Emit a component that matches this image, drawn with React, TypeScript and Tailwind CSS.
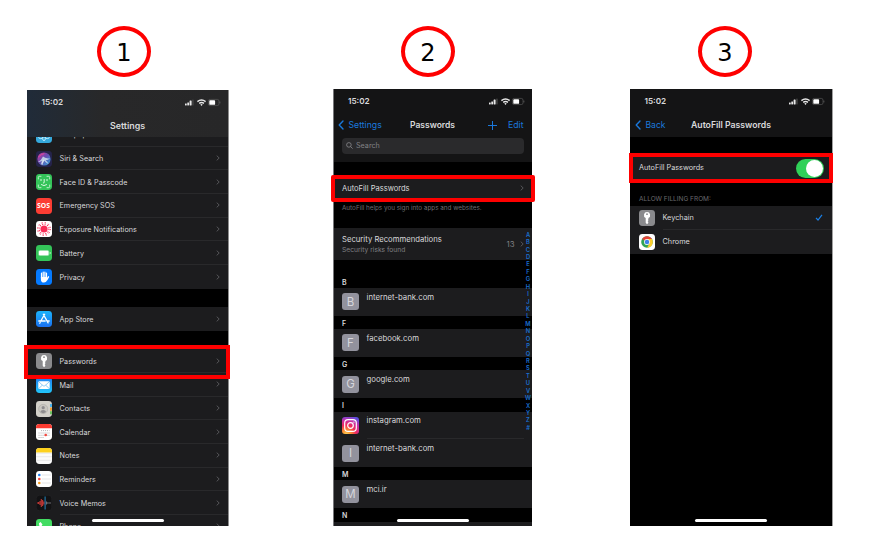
import React from "react";

function Chevron() {
  return (
    <svg className="h-[6px] w-[4px] shrink-0" viewBox="0 0 4 6" fill="none" stroke="#5c5c60" strokeWidth="0.9">
      <path d="M0.7 0.6 3.2 3 0.7 5.4" />
    </svg>
  );
}

function StatusIcons() {
  return (
    <svg className="h-[9px] w-[36px] shrink-0" viewBox="0 0 36 9">
      <g fill="#e8e8e8">
        <rect x="0" y="5.4" width="1.7" height="2" rx="0.4" />
        <rect x="2.3" y="4.4" width="1.7" height="3" rx="0.4" />
        <rect x="4.6" y="2.6" width="2" height="4.8" rx="0.4" />
        <rect x="7.3" y="1.5" width="1.3" height="5.900" rx="0.4" fill="#4b4b4b" />
      </g>
      <g fill="none" stroke="#e8e8e8" strokeWidth="1.4">
        <path d="M12.4 3.6q4.100-3.300 8.200 0" />
        <path d="M14.2 5.4q2.4-1.8 4.8 0" />
      </g>
      <path d="M15.3 6.5q1.200-.8 2.400 0l-1.200 1.400z" fill="#e8e8e8" />
      <rect x="23.4" y="1.4" width="10.600" height="6.200" rx="1.7" fill="none" stroke="#626262" strokeWidth="0.6" />
      <rect x="24.3" y="2.2" width="5.800" height="4.600" rx="0.9" fill="#fff" />
      <path d="M34.9 3.600v1.800" stroke="#626262" strokeWidth="0.8" />
    </svg>
  );
}

function Step({ n }: { n: number }) {
  return (
    <div className="flex h-[51px] w-[54px] items-center justify-center rounded-[50%] border-4 border-[#fe0000] pt-[2px] font-['DejaVu_Sans',sans-serif] text-[24px] leading-none text-black">
      {n}
    </div>
  );
}

function KeyIcon() {
  return (
    <svg viewBox="0 0 16 16" className="size-full">
      <rect width="16" height="16" rx="3.4" fill="#8a8a8d" />
      <path d="M8 2.1a3.100 3.100 0 0 0-1.300 5.900v4.700L8 14.200l1.500-1.500-.8-.9.8-1-.7-.8.6-.7V8A3.100 3.100 0 0 0 8 2.100z" fill="#fff" />
      <circle cx="8" cy="4.2" r="0.9" fill="#8a8a8d" />
    </svg>
  );
}

const icons: Record<string, React.ReactNode> = {
  Wallpaper: (
    <svg viewBox="0 0 16 16" className="size-full">
      <rect width="16" height="16" rx="3.4" fill="#35a9dc" />
      <g fill="none" stroke="#c5ecfa" strokeWidth="0.9">
        <circle cx="8" cy="8" r="1.4" />
        <ellipse cx="8" cy="4.4" rx="1.4" ry="2" />
        <ellipse cx="8" cy="11.6" rx="1.4" ry="2" />
        <ellipse cx="4.7" cy="10.2" rx="2" ry="1.4" />
        <ellipse cx="11.3" cy="10.2" rx="2" ry="1.4" />
      </g>
    </svg>
  ),
  "Siri & Search": (
    <svg viewBox="0 0 16 16" className="size-full">
      <defs>
        <linearGradient id="siri" x1="0" y1="0" x2="1" y2="1">
          <stop offset="0" stopColor="#d43b9b" />
          <stop offset="0.45" stopColor="#6b4bb0" />
          <stop offset="1" stopColor="#29a7d8" />
        </linearGradient>
      </defs>
      <rect width="16" height="16" rx="3.4" fill="#25234a" />
      <circle cx="8" cy="8" r="6.6" fill="url(#siri)" />
      <path d="M2 11q3.2-1.3 5-5.4Q9.5 8 14.2 7.2 12 9 9.7 9.2q2 1.4 2.8 3.8Q9.700 11.700 8.300 9.700 7 12.700 4.600 13.600 5.700 11.300 5.900 9.800 4.300 11 2 11z" fill="#cbe2ee" fillOpacity="0.85" />
      <path d="M2.300 6q3-3 6-3.400" stroke="#db4598" strokeWidth="1" fill="none" />
      <path d="M7.500 8.800 6 14" stroke="#fff" strokeWidth="0.6" />
    </svg>
  ),
  "Face ID & Passcode": (
    <svg viewBox="0 0 16 16" className="size-full">
      <rect width="16" height="16" rx="3.4" fill="#34c459" />
      <g fill="none" stroke="#e4fbe9" strokeWidth="0.8" strokeLinecap="round">
        <path d="M2.300 5V3.500q0-1.200 1.200-1.200H5M11 2.300h1.500q1.200 0 1.200 1.200V5M13.700 11v1.500q0 1.200-1.200 1.200H11M5 13.700H3.500q-1.200 0-1.200-1.200V11" />
        <path d="M5 5.400v1.300M11 5.400v1.300M8.200 5.400v3q0 .6-.8.600M5.400 10.700q2.600 2 5.200 0" strokeWidth="0.95" />
      </g>
    </svg>
  ),
  "Emergency SOS": (
    <div className="flex size-full items-center justify-center rounded-[3.4px] bg-[#fc3d33] pt-px font-['Open_Sans',sans-serif] text-[6.8px] leading-none font-bold text-white">
      SOS
    </div>
  ),
  "Exposure Notifications": (
    <svg viewBox="0 0 16 16" className="size-full">
      <rect width="16" height="16" rx="3.4" fill="#fff" />
      <circle cx="8" cy="8" r="3.6" fill="#fb2b56" />
      <circle cx="8" cy="8" r="5" fill="none" stroke="#fb2b56" strokeWidth="1.200" strokeDasharray="1.200 1.418" />
      <circle cx="8" cy="8" r="6.500" fill="none" stroke="#fb2b56" strokeWidth="1" strokeDasharray="1.200 2.203" />
    </svg>
  ),
  Battery: (
    <svg viewBox="0 0 16 16" className="size-full">
      <rect width="16" height="16" rx="3.4" fill="#34c459" />
      <rect x="2.300" y="5.200" width="11" height="5.600" rx="1.500" fill="#8ee3a2" />
      <rect x="3" y="5.800" width="9.400" height="4.400" rx="0.900" fill="#fff" />
      <path d="M14.200 7v2" stroke="#b9f0c5" strokeWidth="0.900" />
    </svg>
  ),
  Privacy: (
    <svg viewBox="0 0 16 16" className="size-full">
      <rect width="16" height="16" rx="3.4" fill="#057aff" />
      <g stroke="#fff" strokeWidth="1.200" strokeLinecap="round" fill="none">
        <path d="M5.500 4.200V9M7.200 3V9M8.900 3V9M10.500 4.200V9" />
        <path d="M12.500 7.800 10.700 10.800" strokeWidth="1.400" />
      </g>
      <path d="M4.900 8h6.300v2.600q-.6 3-3.300 3-3 0-3-3.400z" fill="#fff" />
    </svg>
  ),
  "App Store": (
    <svg viewBox="0 0 16 16" className="size-full">
      <defs>
        <linearGradient id="store" x1="0" y1="0" x2="0" y2="1">
          <stop offset="0" stopColor="#1cb4fb" />
          <stop offset="1" stopColor="#1a71f1" />
        </linearGradient>
      </defs>
      <rect width="16" height="16" rx="3.400" fill="url(#store)" />
      <g stroke="#fff" strokeWidth="1.300" strokeLinecap="round">
        <path d="M8.700 3.200 4.900 9.800M7.300 3.200l4.800 8.700M2.800 10h6.400M11 10h2.200M4.200 11.500l-.4.700" />
      </g>
    </svg>
  ),
  Passwords: <KeyIcon />,
  Mail: (
    <svg viewBox="0 0 16 16" className="size-full">
      <defs>
        <linearGradient id="mail" x1="0" y1="0" x2="0" y2="1">
          <stop offset="0" stopColor="#1f7bef" />
          <stop offset="1" stopColor="#22c6fa" />
        </linearGradient>
      </defs>
      <rect width="16" height="16" rx="3.400" fill="url(#mail)" />
      <rect x="2.300" y="4.200" width="11.400" height="7.800" rx="1.200" fill="#fff" />
      <path d="M2.800 4.800 7 8.700q1 .8 2 0l4.200-3.900M2.800 11.500l3.500-3.300M13.200 11.500 9.700 8.200" fill="none" stroke="#46a9ee" strokeWidth="0.600" />
    </svg>
  ),
  Contacts: (
    <svg viewBox="0 0 16 16" className="size-full">
      <rect width="16" height="16" rx="3.400" fill="#d3d0c9" />
      <path d="M15 3v3" stroke="#39aef0" strokeWidth="1.800" />
      <path d="M15 6.500v3.200" stroke="#f49b27" strokeWidth="1.800" />
      <path d="M15 10.200v3" stroke="#5cc04e" strokeWidth="1.800" />
      <circle cx="7.200" cy="8" r="4.600" fill="#c9c6c0" stroke="#aaa7a2" strokeWidth="0.600" />
      <circle cx="7.200" cy="6.700" r="1.600" fill="#8e8c8e" />
      <path d="M4.300 11q.5-2 2.900-2t2.900 2q-2.900 2.300-5.800 0z" fill="#8e8c8e" />
    </svg>
  ),
  Calendar: (
    <svg viewBox="0 0 16 16" className="size-full">
      <rect width="16" height="16" rx="3.400" fill="#fff" />
      <path d="M0 4.200V3.400Q0 0 3.400 0h9.200Q16 0 16 3.400v.8z" fill="#fb3b30" />
      <g stroke="#9a9a9c" strokeWidth="0.700" strokeDasharray="1.100 0.900">
        <path d="M5 6.600h8.500M2.500 9h11M2.500 11.300h11M2.500 13.500h6" />
      </g>
      <circle cx="9.700" cy="11" r="1.300" fill="#f5483f" />
    </svg>
  ),
  Notes: (
    <svg viewBox="0 0 16 16" className="size-full">
      <rect width="16" height="16" rx="3.400" fill="#fbfbfb" />
      <path d="M0 4.400v-1Q0 0 3.400 0h9.200Q16 0 16 3.400v1z" fill="#fdd11e" />
      <path d="M0 5.300h16" stroke="#b9b9ad" strokeWidth="0.500" strokeDasharray="0.500 0.500" />
      <path d="M0 8.700h16M0 12.300h16" stroke="#d4d4d6" strokeWidth="0.500" />
    </svg>
  ),
  Reminders: (
    <svg viewBox="0 0 16 16" className="size-full">
      <rect width="16" height="16" rx="3.400" fill="#fff" />
      <circle cx="3.300" cy="4" r="1.300" fill="#1b80f5" />
      <circle cx="3.300" cy="8" r="1.300" fill="#f4453c" />
      <circle cx="3.300" cy="12" r="1.300" fill="#f79a1e" />
      <path d="M5.800 4H15M5.800 8H15M5.800 12H15" stroke="#d3d3d6" strokeWidth="0.600" />
    </svg>
  ),
  "Voice Memos": (
    <svg viewBox="0 0 16 16" className="size-full">
      <rect x="0.200" y="0.200" width="15.600" height="15.600" rx="3.400" fill="#121214" stroke="#303032" strokeWidth="0.400" />
      <path d="M1 8h1M2.600 7v2M4 6v4M5.300 4v8M6.600 5v6M7.900 6.500v3" stroke="#c23936" strokeWidth="1.100" />
      <path d="M9.100 1.500v13" stroke="#2694d6" strokeWidth="0.900" />
      <path d="M10.500 6.500v3M11.800 7.200v1.600M12.500 8H15" stroke="#87878a" strokeWidth="0.800" />
    </svg>
  ),
  Phone: (
    <svg viewBox="0 0 16 16" className="size-full">
      <rect width="16" height="16" rx="3.400" fill="#43dc62" />
      <path d="M3 4.200 4.600 2.900 6.500 5.500 5.700 6.800Q7 9.400 9.300 10.300l1.300-.8 2.600 1.900-1.300 1.700Q9.500 14 6.200 11 3 8 3 4.200z" fill="#fff" />
    </svg>
  ),
};

function SettingsRow({ name, last = false }: { name: string; last?: boolean }) {
  return (
    <div className="flex h-[23.65px] shrink-0 items-stretch bg-[#1c1c1e] pl-[8.500px]">
      <div className="my-auto size-[16px] shrink-0">{icons[name]}</div>
      <div className={`ml-[8px] flex grow items-center justify-between pr-[8.500px] ${last ? "" : "border-b-[0.500px] border-[#29292b]"}`}>
        <span className="pt-[3px] text-[7.200px] tracking-[0.030px]">{name}</span>
        <Chevron />
      </div>
    </div>
  );
}

function BackArrow() {
  return (
    <svg className="h-[10px] w-[6px] shrink-0" viewBox="0 0 6 10" fill="none" stroke="#1a78dc" strokeWidth="1.400" strokeLinecap="round" strokeLinejoin="round">
      <path d="M5 1 1.200 5 5 9" />
    </svg>
  );
}

function HomeBar() {
  return <div className="absolute bottom-[4px] left-1/2 h-[3px] w-[72px] -translate-x-1/2 rounded-full bg-white" />;
}

function SettingsPhone() {
  return (
    <div className="relative flex h-[436px] w-[202px] flex-col overflow-hidden border-r border-[#8d8d8d] bg-black text-[#d9d9db]">
      <div className="flex h-[47px] shrink-0 flex-col bg-[linear-gradient(90deg,#202b39_0%,#242a31_18%,#282829_38%,#272728_100%)]">
        <div className="flex h-[24px] items-center justify-between pr-[7px] pl-[14.500px]">
          <span className="pt-px text-[8.200px] font-semibold">15:02</span>
          <StatusIcons />
        </div>
        <div className="flex h-[23px] items-center justify-center pt-px text-[8.900px] font-semibold">Settings</div>
      </div>
      <div className="flex h-[9.700px] shrink-0 flex-col justify-end overflow-hidden">
        <SettingsRow name="Wallpaper" />
      </div>
      <SettingsRow name="Siri & Search" />
      <SettingsRow name="Face ID & Passcode" />
      <SettingsRow name="Emergency SOS" />
      <SettingsRow name="Exposure Notifications" />
      <SettingsRow name="Battery" />
      <SettingsRow name="Privacy" last />
      <div className="h-[18.400px] shrink-0" />
      <SettingsRow name="App Store" last />
      <div className="h-[18.900px] shrink-0" />
      <SettingsRow name="Passwords" />
      <SettingsRow name="Mail" />
      <SettingsRow name="Contacts" />
      <SettingsRow name="Calendar" />
      <SettingsRow name="Notes" />
      <SettingsRow name="Reminders" />
      <SettingsRow name="Voice Memos" />
      <SettingsRow name="Phone" />
      <HomeBar />
    </div>
  );
}

function Letter({ children }: { children: string }) {
  return <div className="flex h-[13.500px] shrink-0 items-center pt-[3px] pl-[8px] text-[7px] font-semibold">{children}</div>;
}

function InstagramIcon() {
  return (
    <svg viewBox="0 0 17 17" className="size-[17px]">
      <defs>
        <radialGradient id="insta" cx="0.250" cy="1.050" r="1.150">
          <stop offset="0" stopColor="#fed957" />
          <stop offset="0.250" stopColor="#fb8c30" />
          <stop offset="0.500" stopColor="#ee2a5c" />
          <stop offset="0.750" stopColor="#c92fa8" />
          <stop offset="1" stopColor="#5b4fe0" />
        </radialGradient>
      </defs>
      <rect width="17" height="17" rx="3" fill="url(#insta)" />
      <g fill="none" stroke="#fff" strokeWidth="1.200">
        <rect x="2.700" y="2.700" width="11.600" height="11.600" rx="3.400" />
        <circle cx="8.500" cy="8.500" r="2.800" />
      </g>
      <circle cx="11.900" cy="5.100" r="0.700" fill="#fff" />
    </svg>
  );
}

function Account({ site, initial, line = false }: { site: string; initial?: string; line?: boolean }) {
  return (
    <div className="flex h-[27.700px] shrink-0 bg-[#1c1c1e] pl-[8px]">
      <div className="mt-[5.300px] size-[17px] shrink-0">
        {initial ? (
          <div className="flex size-full items-center justify-center rounded-[3px] bg-[#92929d] pt-px text-[11.500px] leading-none text-[#d6d6dc]">
            {initial}
          </div>
        ) : (
          <InstagramIcon />
        )}
      </div>
      <div className={`mr-[8px] ml-[7.500px] grow pt-[3.800px] text-[7.750px] leading-[10px] ${line ? "border-b-[0.500px] border-[#29292b]" : ""}`}>
        {site}
      </div>
    </div>
  );
}

function PasswordsPhone() {
  return (
    <div className="relative flex h-[437px] w-[199px] flex-col overflow-hidden border-l border-[#77777a] bg-black text-[#d9d9db]">
      <div className="flex h-[73px] shrink-0 flex-col bg-[#141415]">
        <div className="flex h-[25px] items-center justify-between pr-[7px] pl-[14px]">
          <span className="text-[8.200px] font-semibold">15:02</span>
          <StatusIcons />
        </div>
        <div className="flex h-[22px] items-center pt-px pr-[8.500px] pl-[4px] text-[8.700px]">
          <div className="flex w-[72px] items-center gap-[4.500px] text-[#1a78dc]">
            <BackArrow />
            Settings
          </div>
          <div className="text-[8.500px] font-semibold">Passwords</div>
          <div className="flex grow items-center justify-end gap-[11.500px] text-[#1a78dc]">
            <svg className="size-[9px]" viewBox="0 0 9 9" stroke="#1a78dc" strokeWidth="1">
              <path d="M4.500 0v9M0 4.500h9" />
            </svg>
            Edit
          </div>
        </div>
        <div className="mt-[2px] mr-[8.500px] ml-[8px] flex h-[15.500px] items-center gap-[3px] rounded-[4px] bg-[#2a2a2c] pl-[4px] text-[7.200px] text-[#828286]">
          <svg className="size-[7px]" viewBox="0 0 7 7" fill="none" stroke="#8a8a8e" strokeWidth="0.800">
            <circle cx="2.900" cy="2.900" r="2.300" />
            <path d="m4.600 4.600 2 2" />
          </svg>
          <span className="pt-px">Search</span>
        </div>
      </div>
      <div className="mt-[14px] flex h-[24px] shrink-0 items-center justify-between bg-[#1c1c1e] pr-[8px] pl-[8px] text-[7.550px]">
        <span className="pt-[1.500px]">AutoFill Passwords</span>
        <Chevron />
      </div>
      <div className="flex h-[17px] shrink-0 items-center pt-px pl-[8px] text-[6.330px] text-[#6f6f73]">
        AutoFill helps you sign into apps and websites.
      </div>
      <div className="mt-[10.500px] flex h-[32.500px] shrink-0 items-center justify-between bg-[#1c1c1e] pr-[8px] pl-[8px]">
        <div className="pt-[2px]">
          <div className="text-[7.700px] leading-[10px]">Security Recommendations</div>
          <div className="text-[6.700px] leading-[10px] text-[#808084]">Security risks found</div>
        </div>
        <div className="flex items-center gap-[5.500px] text-[7.800px] text-[#808084]">
          <span className="pt-[1.500px]">13</span>
          <Chevron />
        </div>
      </div>
      <div className="h-[14.500px] shrink-0" />
      <Letter>B</Letter>
      <Account site="internet-bank.com" initial="B" />
      <Letter>F</Letter>
      <Account site="facebook.com" initial="F" />
      <Letter>G</Letter>
      <Account site="google.com" initial="G" />
      <Letter>I</Letter>
      <Account site="instagram.com" line />
      <Account site="internet-bank.com" initial="I" />
      <Letter>M</Letter>
      <Account site="mci.ir" initial="M" />
      <Letter>N</Letter>
      <div className="h-[8px] shrink-0 bg-[#1c1c1e]" />
      <div className="absolute top-[141.800px] right-0 flex w-[8px] flex-col items-center text-[5.800px] font-semibold text-[#1a6fd0]">
        {"ABCDEFGHIJKLMNOPQRSTUVWXYZ#".split("").map((c) => (
          <span key={c} className="h-[7.430px] leading-[7.430px]">
            {c}
          </span>
        ))}
      </div>
      <HomeBar />
    </div>
  );
}

function ChromeIcon() {
  return (
    <svg viewBox="0 0 16 16" className="size-full">
      <rect width="16" height="16" rx="3.400" fill="#fff" />
      <circle cx="8" cy="8" r="5.800" fill="#31a454" />
      <path d="M8 8 2.980 5.100A5.800 5.800 0 0 1 13.020 5.100z" fill="#e4453a" />
      <path d="M8 5.100h5.020A5.800 5.800 0 0 1 8 13.800l2.500-4.400z" fill="#fccd2d" />
      <circle cx="8" cy="8" r="2.900" fill="#fff" />
      <circle cx="8" cy="8" r="2.250" fill="#3f82ea" />
    </svg>
  );
}

function AutoFillPhone() {
  return (
    <div className="relative flex h-[437px] w-[203px] flex-col overflow-hidden border-r border-[#a0a0a0] bg-black text-[#d9d9db]">
      <div className="flex h-[48px] shrink-0 flex-col bg-[#141415]">
        <div className="flex h-[25px] items-center justify-between pr-[7px] pl-[14.500px]">
          <span className="text-[8.200px] font-semibold">15:02</span>
          <StatusIcons />
        </div>
        <div className="flex h-[22px] items-center pt-px pl-[5px] text-[8.600px]">
          <div className="flex w-[56px] items-center gap-[4.500px] text-[#1a78dc]">
            <BackArrow />
            Back
          </div>
          <div className="pt-px text-[8.700px] font-semibold">AutoFill Passwords</div>
        </div>
      </div>
      <div className="mt-[18px] flex h-[26px] shrink-0 items-center justify-between bg-[#1c1c1e] pr-[8px] pl-[9px] text-[7.250px]">
        <span className="pt-px">AutoFill Passwords</span>
        <div className="flex h-[19px] w-[28px] justify-end rounded-full bg-[#30d158] p-[1px]">
          <div className="size-[17px] rounded-full bg-white" />
        </div>
      </div>
      <div className="mt-[11px] flex h-[14px] shrink-0 items-center pt-[2px] pl-[9px] text-[6.500px] text-[#69696d]">ALLOW FILLING FROM:</div>
      <div className="flex h-[23.700px] shrink-0 bg-[#1c1c1e] pl-[9px]">
        <div className="my-auto size-[16px]">
          <KeyIcon />
        </div>
        <div className="ml-[7.500px] flex grow items-center justify-between border-b-[0.500px] border-[#29292b] pr-[9.500px] text-[7.300px]">
          <span className="pt-[2px]">Keychain</span>
          <svg className="h-[7px] w-[8px]" viewBox="0 0 8 7" fill="none" stroke="#1a80e8" strokeWidth="1.200">
            <path d="m1 3.800 2 2.200L7 .8" />
          </svg>
        </div>
      </div>
      <div className="flex h-[24px] shrink-0 items-center bg-[#1c1c1e] pl-[9px] text-[7.300px]">
        <div className="mr-[7.500px] size-[16px]">
          <ChromeIcon />
        </div>
        <span className="pt-px">Chrome</span>
      </div>
      <HomeBar />
    </div>
  );
}

export default function App() {
  return (
    <div className="flex h-[550px] w-[880px] items-start overflow-hidden bg-white pt-[26px] pl-[27px] font-[Inter,sans-serif]">
      <div className="flex w-[202px] flex-col gap-[13px]">
        <div className="pl-[70px]">
          <Step n={1} />
        </div>
        <div className="relative">
          <SettingsPhone />
          <div className="absolute top-[255px] left-[-3px] h-[34px] w-[206px] border-4 border-[#fe0000]" />
        </div>
      </div>
      <div className="ml-[104px] flex w-[199px] flex-col gap-[12px]">
        <div className="pl-[68px]">
          <Step n={2} />
        </div>
        <div className="relative">
          <PasswordsPhone />
          <div className="absolute top-[86px] left-[-2px] h-[27px] w-[204px] rounded-[2px] border-4 border-[#fe0000]" />
        </div>
      </div>
      <div className="ml-[98px] flex w-[203px] flex-col gap-[12px]">
        <div className="pl-[68px]">
          <Step n={3} />
        </div>
        <div className="relative">
          <AutoFillPhone />
          <div className="absolute top-[64px] left-[-1px] h-[30px] w-[204px] border-4 border-[#fe0000]" />
        </div>
      </div>
    </div>
  );
}
